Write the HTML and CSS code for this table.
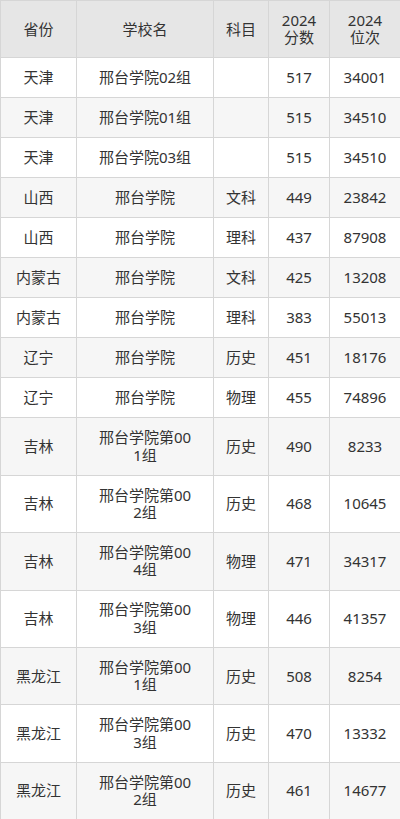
FILE: index.html
```html
<!DOCTYPE html>
<html lang="zh-CN">
<head>
<meta charset="utf-8">
<title>邢台学院录取分数</title>
<link rel="stylesheet" href="styles.css">
</head>
<body>
<table class="score-table">
  <colgroup>
    <col class="c-prov">
    <col class="c-school">
    <col class="c-subj">
    <col class="c-score">
    <col class="c-rank">
  </colgroup>
  <thead>
    <tr>
      <th>省份</th>
      <th>学校名</th>
      <th>科目</th>
      <th class="year">2024 分数</th>
      <th class="year">2024 位次</th>
    </tr>
  </thead>
  <tbody>
    <tr><td>天津</td><td class="school">邢台学院02组</td><td></td><td>517</td><td>34001</td></tr>
    <tr><td>天津</td><td class="school">邢台学院01组</td><td></td><td>515</td><td>34510</td></tr>
    <tr><td>天津</td><td class="school">邢台学院03组</td><td></td><td>515</td><td>34510</td></tr>
    <tr><td>山西</td><td class="school">邢台学院</td><td>文科</td><td>449</td><td>23842</td></tr>
    <tr><td>山西</td><td class="school">邢台学院</td><td>理科</td><td>437</td><td>87908</td></tr>
    <tr><td>内蒙古</td><td class="school">邢台学院</td><td>文科</td><td>425</td><td>13208</td></tr>
    <tr><td>内蒙古</td><td class="school">邢台学院</td><td>理科</td><td>383</td><td>55013</td></tr>
    <tr><td>辽宁</td><td class="school">邢台学院</td><td>历史</td><td>451</td><td>18176</td></tr>
    <tr><td>辽宁</td><td class="school">邢台学院</td><td>物理</td><td>455</td><td>74896</td></tr>
    <tr><td>吉林</td><td class="school">邢台学院第001组</td><td>历史</td><td>490</td><td>8233</td></tr>
    <tr><td>吉林</td><td class="school">邢台学院第002组</td><td>历史</td><td>468</td><td>10645</td></tr>
    <tr><td>吉林</td><td class="school">邢台学院第004组</td><td>物理</td><td>471</td><td>34317</td></tr>
    <tr><td>吉林</td><td class="school">邢台学院第003组</td><td>物理</td><td>446</td><td>41357</td></tr>
    <tr><td>黑龙江</td><td class="school">邢台学院第001组</td><td>历史</td><td>508</td><td>8254</td></tr>
    <tr><td>黑龙江</td><td class="school">邢台学院第003组</td><td>历史</td><td>470</td><td>13332</td></tr>
    <tr><td>黑龙江</td><td class="school">邢台学院第002组</td><td>历史</td><td>461</td><td>14677</td></tr>
  </tbody>
</table>
</body>
</html>
```

FILE: styles.css
```css
html, body {
  margin: 0;
  padding: 0;
  background: #ffffff;
}

body {
  font-family: "Noto Sans", "Noto Sans CJK SC", sans-serif;
  font-size: 15px;
  color: #333333;
}

.score-table {
  width: 400px;
  border-collapse: collapse;
  table-layout: fixed;
}

.c-prov { width: 76px; }
.c-school { width: 137px; }
.c-subj { width: 55px; }
.c-score { width: 61px; }
.c-rank { width: 71px; }

.score-table th,
.score-table td {
  border: 1px solid #d6d6d6;
  padding: 10.8px 4px;
  line-height: 17.4px;
  text-align: center;
  vertical-align: middle;
  font-weight: normal;
}

.score-table th {
  background: #e6e6e6;
}

.score-table th.year {
  padding-left: 12px;
  padding-right: 12px;
}

.score-table td.school {
  padding-left: 20px;
  padding-right: 20px;
  word-break: break-all;
}

.score-table tbody tr:nth-child(even) td {
  background: #f6f6f6;
}
```
